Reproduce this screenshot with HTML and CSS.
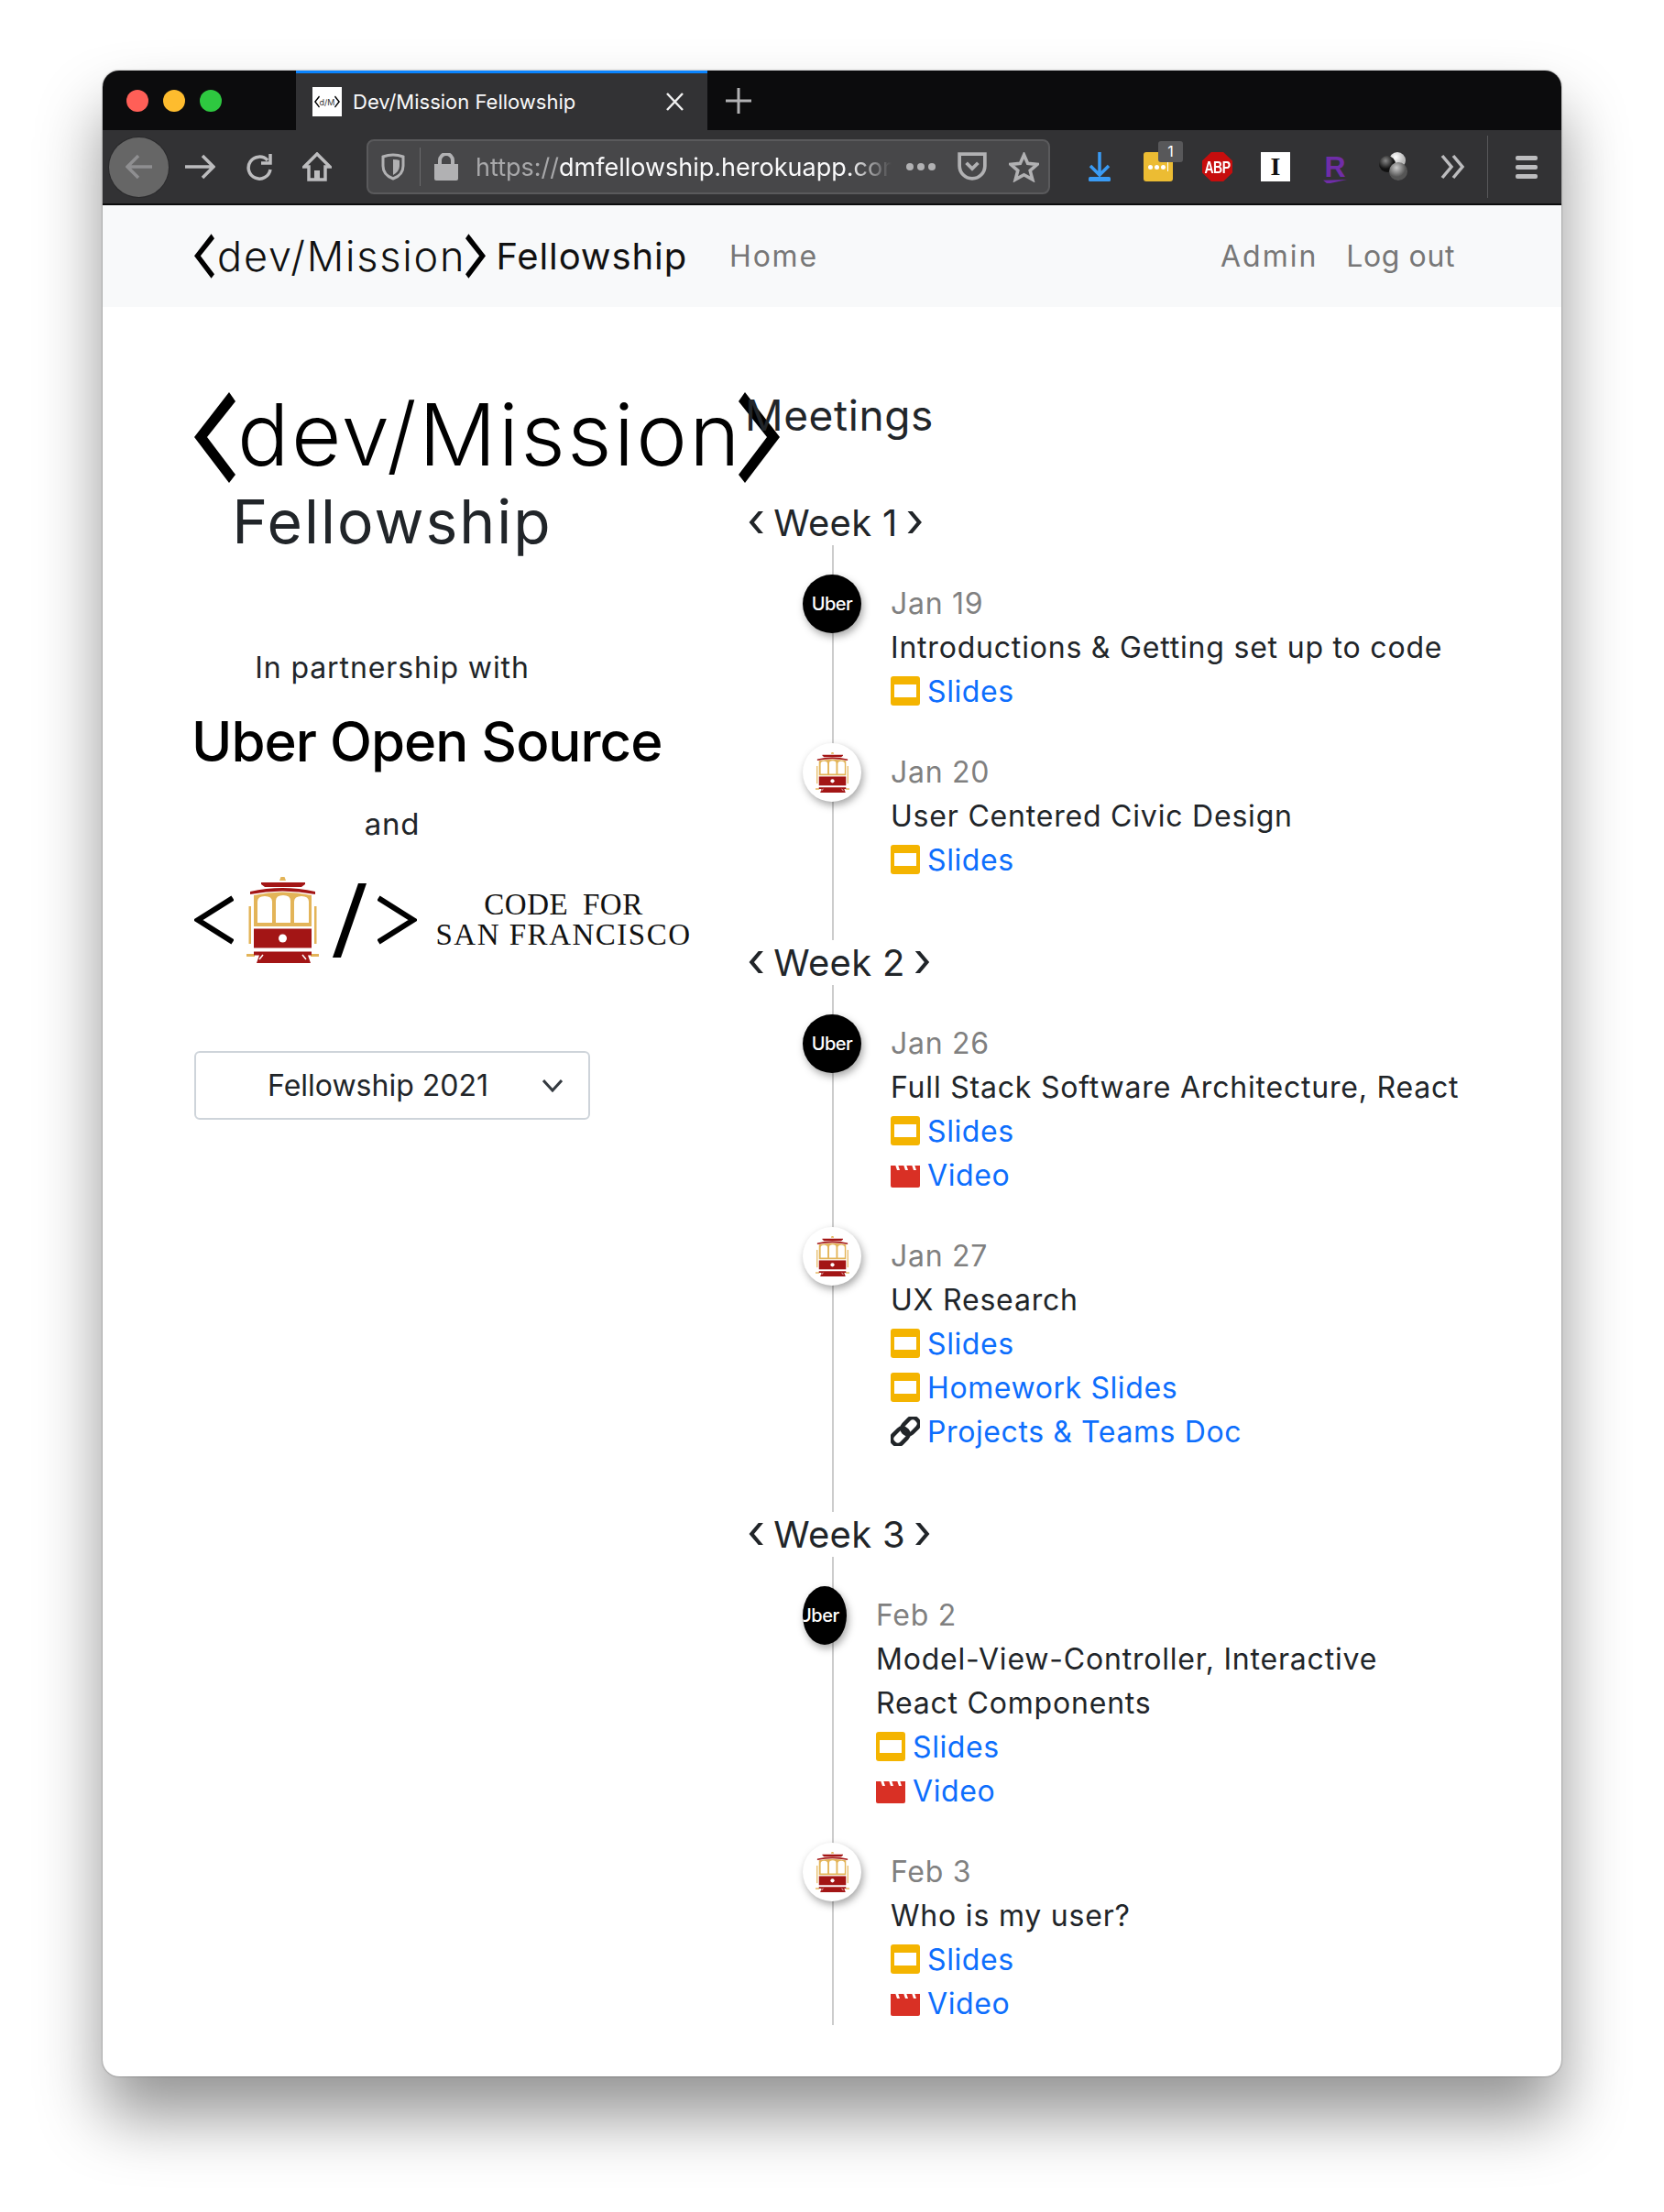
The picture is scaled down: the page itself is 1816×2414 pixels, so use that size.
FILE: index.html
```html
<!DOCTYPE html>
<html>
<head>
<meta charset="utf-8">
<title>Dev/Mission Fellowship</title>
<link rel="stylesheet" href="styles.css">
</head>
<body>

<svg class="defs" width="0" height="0">
	<symbol id="chev-l" viewBox="0 0 45 99"><polygon points="38,0 45,10 14,49 45,90 38,99 0,49"/></symbol>
	<symbol id="chev-r" viewBox="0 0 45 99"><polygon points="7,0 0,10 31,49 0,90 7,99 45,49"/></symbol>
	<symbol id="trolley" viewBox="0 0 79 94">
		<polygon points="36,4 37.5,0 41.5,0 43,4" fill="#e3b458"/>
		<path d="M16 6h48v2l-4 3H20l-4-3z" fill="#a31515"/>
		<path d="M4 16Q39 8 75 16v3Q39 12 4 19z" fill="#a31515"/>
		<path d="M8 20Q39 13 71 20v34H8z" fill="#e3b458"/>
		<path d="M12 50V27q0-6 8-6t8 6v23zM32 50V26q0-6 8-6t8 6v24zM52 50V27q0-6 8-6t8 6v23z" fill="#fff"/>
		<rect x="2.5" y="32" width="2.5" height="41" fill="#e3b458"/>
		<rect x="74" y="32" width="2.5" height="41" fill="#e3b458"/>
		<rect x="8" y="56.500" width="63" height="21" fill="#a31515"/>
		<circle cx="39.500" cy="67" r="4.500" fill="#fff"/>
		<rect x="0" y="84" width="9" height="3" fill="#e3b458"/>
		<rect x="70" y="84" width="9" height="3" fill="#e3b458"/>
		<path d="M8 81.500h63v4h-4l3 8.500H11l3-8.500H8z" fill="#a31515"/>
		<path d="M18 85l-4 5M61 85l4 5" stroke="#fff" stroke-width="1.500"/>
	</symbol>
	<symbol id="slides" viewBox="0 0 32 32">
		<rect width="32" height="32" rx="3" fill="#f4b400"/>
		<rect x="4" y="9" width="24" height="14" fill="#fff"/>
	</symbol>
	<symbol id="video" viewBox="0 0 32 32">
		<path d="M0 6h32v22a2 2 0 0 1-2 2H2a2 2 0 0 1-2-2z" fill="#d93025"/>
		<path d="M5 5l2 6h3L8 5zM14 5l2 6h3l-2-6zM23 5l2 6h3l-2-6z" fill="#fff"/>
	</symbol>
	<symbol id="link" viewBox="0 0 32 32">
		<g fill="none" stroke="#212529" stroke-width="4.500" transform="rotate(-45 16 16)">
			<rect x="-2" y="9.500" width="20" height="13" rx="6"/>
			<rect x="14" y="9.500" width="20" height="13" rx="6"/>
		</g>
	</symbol>
</svg>

<div class="window">

	<div class="tabstrip">
		<span class="light red"></span>
		<span class="light orange"></span>
		<span class="light green"></span>
		<div class="tab">
			<span class="favicon">
				<svg class="fav-chev"><use href="#chev-l"/></svg><span>d/M</span><svg class="fav-chev"><use href="#chev-r"/></svg>
			</span>
			<span class="tab-title">Dev/Mission Fellowship</span>
			<svg class="tab-close" viewBox="0 0 21 20"><path d="M2 1l17 18M19 1L2 19"/></svg>
		</div>
		<svg class="new-tab" viewBox="0 0 28 28"><path d="M14 0v28M0 14h28"/></svg>
	</div>

	<div class="toolbar">
		<span class="back-btn">
			<svg viewBox="0 0 30 28"><path d="M29 14H2M14 2L2 14l12 12"/></svg>
		</span>
		<svg class="tool forward" viewBox="0 0 33 28"><path d="M0 14h30M19 2l12 12-12 12"/></svg>
		<svg class="tool reload" viewBox="0 0 30 30"><path d="M24 8a12 12 0 1 0 3 10"/><path d="M27 1v10H17" /></svg>
		<svg class="tool home" viewBox="0 0 32 32"><path d="M16 2L2 16h5v14h18V16h5z"/><rect class="solid" x="13" y="20" width="6" height="10"/></svg>

		<div class="urlbar">
			<svg class="url-shield" viewBox="0 0 26 30"><path d="M2 4q11-4 22 0v10q0 10-11 14Q2 24 2 14z"/><path class="solid" d="M13 7q5 0 7 1v6q0 6-7 10z"/></svg>
			<span class="url-sep"></span>
			<svg class="url-lock" viewBox="0 0 26 30"><path class="solid" d="M0 12h26v16a2 2 0 0 1-2 2H2a2 2 0 0 1-2-2z"/><path d="M6 13V8a7 7 0 0 1 14 0v5" fill="none" stroke="#b1b1b3" stroke-width="4"/></svg>
			<span class="url-text"><span class="url-scheme">https://</span>dmfellowship.herokuapp.com</span>
			<span class="url-dots"><i></i><i></i><i></i></span>
			<svg class="url-pocket" viewBox="0 0 30 30"><path d="M2 2h26v12a13 13 0 0 1-26 0z"/><path d="M9 11l6 6 6-6"/></svg>
			<svg class="url-star" viewBox="0 0 32 32"><path d="M16 3l4 9 10 1-7.500 6.500L25 29l-9-5-9 5 2.500-9.500L2 13l10-1z"/></svg>
		</div>

		<svg class="ext download" viewBox="0 0 24 32"><path d="M12 0v24M2 15l10 10 10-10" fill="none" stroke="#3a9bf4" stroke-width="3.500"/><rect y="27" width="24" height="5" rx="1.500" fill="#3a9bf4"/></svg>
		<span class="ext lastpass">
			<span class="lp-dots"><i></i><i></i><i></i><b></b></span>
			<span class="lp-badge">1</span>
		</span>
		<span class="ext abp"><span>ABP</span></span>
		<span class="ext instapaper">I</span>
		<span class="ext readkit">R</span>
		<svg class="ext balls" viewBox="0 0 30 32">
			<defs>
				<radialGradient id="ball-w" cx="40%" cy="30%"><stop offset="0" stop-color="#fff"/><stop offset="1" stop-color="#bbb"/></radialGradient>
				<radialGradient id="ball-k" cx="40%" cy="30%"><stop offset="0" stop-color="#888"/><stop offset="1" stop-color="#111"/></radialGradient>
				<radialGradient id="ball-g" cx="40%" cy="30%"><stop offset="0" stop-color="#ccc"/><stop offset="1" stop-color="#555"/></radialGradient>
			</defs>
			<circle cx="20" cy="9" r="9" fill="url(#ball-w)"/>
			<circle cx="9" cy="13" r="9" fill="url(#ball-k)"/>
			<circle cx="21" cy="21" r="10" fill="url(#ball-g)"/>
		</svg>
		<svg class="tool more" viewBox="0 0 27 28"><path d="M2 2l10 12L2 26M14 2l10 12-10 12"/></svg>
		<span class="tool-sep"></span>
		<span class="hamburger"><i></i><i></i><i></i></span>
	</div>

	<div class="navbar">
		<a class="brand">
			<svg class="brand-chev"><use href="#chev-l"/></svg><span class="brand-dm">dev/Mission</span><svg class="brand-chev"><use href="#chev-r"/></svg>
			<span class="brand-name">Fellowship</span>
		</a>
		<a class="nav-link home-link">Home</a>
		<a class="nav-link admin-link">Admin</a>
		<a class="nav-link">Log out</a>
	</div>

	<div class="content">

		<div class="sidebar">
			<div class="hero-logo">
				<svg class="hero-chev"><use href="#chev-l"/></svg><span class="hero-dm">dev/Mission</span><svg class="hero-chev"><use href="#chev-r"/></svg>
			</div>
			<h1 class="hero-name">Fellowship</h1>
			<p class="partner-text">In partnership with</p>
			<div class="uber-logo">Uber Open Source</div>
			<p class="and-text">and</p>
			<div class="c4sf-logo">
				<svg class="c4sf-mark" viewBox="0 0 43 54"><path d="M42 3L4 27l38 24" fill="none" stroke="#000" stroke-width="6"/></svg>
				<svg class="c4sf-trolley"><use href="#trolley"/></svg>
				<svg class="c4sf-slash" viewBox="0 0 37 81"><polygon points="28,0 37,0 9,81 0,81"/></svg>
				<svg class="c4sf-mark" viewBox="0 0 43 54"><path d="M1 3l38 24L1 51" fill="none" stroke="#000" stroke-width="6"/></svg>
				<div class="c4sf-text">
					<span class="c4sf-line1">CODE FOR</span>
					<span>SAN FRANCISCO</span>
				</div>
			</div>
			<div class="year-select">
				Fellowship 2021
				<svg viewBox="0 0 22 14"><path d="M1 1l10 11L21 1"/></svg>
			</div>
		</div>

		<div class="meetings">
			<h2 class="meetings-title">Meetings</h2>

			<h4 class="week"><span class="wk-arrow">&lsaquo;</span><span>Week 1</span><span class="wk-arrow">&rsaquo;</span></h4>
			<ul class="timeline">
				<li class="entry">
					<span class="badge badge-uber"><span>Uber</span></span>
					<div class="entry-body">
						<div class="date">Jan 19</div>
						<div class="topic">Introductions &amp; Getting set up to code</div>
						<a class="res"><svg><use href="#slides"/></svg>Slides</a>
					</div>
				</li>
				<li class="entry">
					<span class="badge badge-c4sf"><svg><use href="#trolley"/></svg></span>
					<div class="entry-body">
						<div class="date">Jan 20</div>
						<div class="topic">User Centered Civic Design</div>
						<a class="res"><svg><use href="#slides"/></svg>Slides</a>
					</div>
				</li>
			</ul>

			<h4 class="week"><span class="wk-arrow">&lsaquo;</span><span>Week 2</span><span class="wk-arrow">&rsaquo;</span></h4>
			<ul class="timeline">
				<li class="entry">
					<span class="badge badge-uber"><span>Uber</span></span>
					<div class="entry-body">
						<div class="date">Jan 26</div>
						<div class="topic">Full Stack Software Architecture, React</div>
						<a class="res"><svg><use href="#slides"/></svg>Slides</a>
						<a class="res"><svg><use href="#video"/></svg>Video</a>
					</div>
				</li>
				<li class="entry">
					<span class="badge badge-c4sf"><svg><use href="#trolley"/></svg></span>
					<div class="entry-body">
						<div class="date">Jan 27</div>
						<div class="topic">UX Research</div>
						<a class="res"><svg><use href="#slides"/></svg>Slides</a>
						<a class="res"><svg><use href="#slides"/></svg>Homework Slides</a>
						<a class="res"><svg><use href="#link"/></svg>Projects &amp; Teams Doc</a>
					</div>
				</li>
			</ul>

			<h4 class="week"><span class="wk-arrow">&lsaquo;</span><span>Week 3</span><span class="wk-arrow">&rsaquo;</span></h4>
			<ul class="timeline last">
				<li class="entry">
					<span class="badge badge-uber squeezed"><span>Uber</span></span>
					<div class="entry-body">
						<div class="date">Feb 2</div>
						<div class="topic">Model-View-Controller, Interactive<br>React Components</div>
						<a class="res"><svg><use href="#slides"/></svg>Slides</a>
						<a class="res"><svg><use href="#video"/></svg>Video</a>
					</div>
				</li>
				<li class="entry">
					<span class="badge badge-c4sf"><svg><use href="#trolley"/></svg></span>
					<div class="entry-body">
						<div class="date">Feb 3</div>
						<div class="topic">Who is my user?</div>
						<a class="res"><svg><use href="#slides"/></svg>Slides</a>
						<a class="res"><svg><use href="#video"/></svg>Video</a>
					</div>
				</li>
			</ul>
		</div>

	</div>
</div>

</body>
</html>
```

FILE: styles.css
```css
html, body {
	margin: 0;
	padding: 0;
	background: #fff;
}
body {
	height: 2414px;
	overflow: hidden;
	font-family: Inter, "Liberation Sans", sans-serif;
	color: #212529;
}
.defs {
	position: absolute;
}
h1, h2, h4, p, ul {
	margin: 0;
	padding: 0;
	font-weight: 400;
}

/* window */
.window {
	width: 1592px;
	height: 2189px;
	margin: 77px 0 0 112px;
	background: #fff;
	border-radius: 18px;
	overflow: hidden;
	box-shadow: 0 44px 70px rgba(0,0,0,.42), 0 0 2px rgba(0,0,0,.5);
}

/* tab strip */
.tabstrip {
	display: flex;
	align-items: center;
	height: 65px;
	background: #0c0c0d;
}
.light {
	width: 24px;
	height: 24px;
	border-radius: 50%;
	margin-right: 16px;
}
.red {
	background: #ff5f57;
	margin-left: 26px;
}
.orange {
	background: #febc2e;
}
.green {
	background: #2ec840;
	margin-right: 0;
}
.tab {
	display: flex;
	align-items: center;
	width: 449px;
	height: 62px;
	margin-left: 81px;
	background: #323234;
	border-top: 3px solid #0a84ff;
}
.favicon {
	display: flex;
	align-items: center;
	justify-content: center;
	width: 32px;
	height: 32px;
	margin-left: 18px;
	background: #fff;
	color: #333;
	font-size: 9px;
}
.fav-chev {
	width: 6px;
	height: 18px;
}
.tab-title {
	margin-left: 12px;
	width: 341px;
	font-size: 22px;
	color: #f9f9fa;
	white-space: nowrap;
}
.tab-close {
	width: 21px;
	height: 20px;
	fill: none;
	stroke: #f0f0f0;
	stroke-width: 2.5;
}
.new-tab {
	width: 28px;
	height: 28px;
	margin-left: 20px;
	fill: none;
	stroke: #b1b1b3;
	stroke-width: 3;
}

/* toolbar */
.toolbar {
	display: flex;
	align-items: center;
	height: 80px;
	background: #323234;
	border-bottom: 2px solid #0c0c0d;
}
.toolbar svg {
	flex: none;
}
.tool path, .tool rect {
	fill: none;
	stroke: #bcbcbe;
	stroke-width: 3.5;
}
.tool .solid {
	fill: #bcbcbe;
	stroke: none;
}
.back-btn {
	display: flex;
	align-items: center;
	justify-content: center;
	width: 65px;
	height: 65px;
	margin-left: 7px;
	border-radius: 50%;
	background: #666;
	box-shadow: 0 0 0 1px #2a2a2c;
}
.back-btn svg {
	width: 30px;
	height: 28px;
	fill: none;
	stroke: #8f8f91;
	stroke-width: 3.5;
}
.forward {
	width: 33px;
	height: 28px;
	margin-left: 18px;
}
.reload {
	width: 30px;
	height: 30px;
	margin-left: 33px;
}
.home {
	width: 32px;
	height: 32px;
	margin-left: 32px;
}
.urlbar {
	display: flex;
	flex: none;
	align-items: center;
	box-sizing: border-box;
	width: 746px;
	height: 60px;
	margin-left: 38px;
	background: #474749;
	border: 2px solid #5a5a5c;
	border-radius: 8px;
}
.url-shield {
	width: 26px;
	height: 30px;
	margin-left: 14px;
	fill: none;
	stroke: #b1b1b3;
	stroke-width: 3;
}
.url-shield .solid {
	stroke: none;
	fill: #b1b1b3;
}
.url-sep {
	width: 1px;
	height: 42px;
	margin-left: 16px;
	background: #6a6a6c;
}
.url-lock {
	width: 26px;
	height: 30px;
	margin-left: 15px;
}
.url-lock .solid {
	fill: #b1b1b3;
}
.url-text {
	width: 454px;
	margin-left: 19px;
	overflow: hidden;
	white-space: nowrap;
	font-size: 27px;
	color: #f9f9fa;
	-webkit-mask-image: linear-gradient(to right, #000 90%, transparent 100%);
	mask-image: linear-gradient(to right, #000 90%, transparent 100%);
}
.url-scheme {
	color: #a8a8aa;
}
.url-dots {
	display: flex;
	gap: 4px;
	margin-left: 16px;
}
.url-dots i {
	display: block;
	width: 8px;
	height: 8px;
	border-radius: 50%;
	background: #b1b1b3;
}
.url-pocket {
	width: 32px;
	height: 32px;
	margin-left: 24px;
	fill: none;
	stroke: #b1b1b3;
	stroke-width: 3.5;
}
.url-star {
	width: 33px;
	height: 33px;
	margin-left: 24px;
	fill: none;
	stroke: #b1b1b3;
	stroke-width: 3.5;
}

/* extensions */
.ext {
	display: flex;
	flex: none;
	align-items: center;
	justify-content: center;
	height: 32px;
}
.download {
	width: 24px;
	margin-left: 42px;
}
.lastpass {
	position: relative;
	width: 32px;
	margin-left: 36px;
	background: #ecbc33;
	border-radius: 3px;
}
.lp-dots {
	display: flex;
	align-items: center;
	gap: 2px;
}
.lp-dots i {
	width: 5px;
	height: 5px;
	border-radius: 50%;
	background: #fff;
}
.lp-dots b {
	width: 1px;
	height: 10px;
	background: #fff;
}
.lp-badge {
	position: absolute;
	top: -12px;
	left: 16px;
	width: 27px;
	height: 23px;
	border-radius: 3px;
	background: #58585a;
	color: #fff;
	font-size: 16px;
	line-height: 23px;
	text-align: center;
}
.abp {
	width: 33px;
	margin-left: 32px;
	background: #c70d0d;
	clip-path: polygon(30% 0, 70% 0, 100% 30%, 100% 70%, 70% 100%, 30% 100%, 0 70%, 0 30%);
	color: #fff;
	font: bold 14px "Liberation Sans", sans-serif;
	letter-spacing: -.5px;
}
.abp span {
	transform: scaleY(1.3);
}
.instapaper {
	width: 32px;
	margin-left: 31px;
	background: #fff;
	color: #111;
	font: bold 28px "Liberation Serif", serif;
}
.readkit {
	position: relative;
	width: 26px;
	margin-left: 36px;
	color: #6f2da8;
	font: bold 32px "Liberation Sans", sans-serif;
}
.readkit::after {
	content: "";
	position: absolute;
	left: 0;
	bottom: -2px;
	width: 26px;
	height: 4px;
	background: #6f2da8;
	clip-path: polygon(0 20%, 100% 0, 30% 100%, 15% 100%);
}
.balls {
	width: 32px;
	margin-left: 34px;
}
.more {
	width: 27px;
	height: 28px;
	margin-left: 36px;
}
.tool-sep {
	width: 1px;
	height: 68px;
	margin-left: 24px;
	background: #58585a;
}
.hamburger {
	display: flex;
	flex-direction: column;
	gap: 5px;
	width: 24px;
	margin-left: 30px;
}
.hamburger i {
	display: block;
	height: 5px;
	border-radius: 2px;
	background: #bcbcbe;
}

/* site nav */
.navbar {
	display: flex;
	align-items: center;
	height: 111px;
	padding-left: 100px;
	background: #f8f9fa;
}
.brand {
	display: flex;
	align-items: center;
	color: #111;
}
.brand-chev {
	flex: none;
	width: 22px;
	height: 49px;
}
.brand-dm {
	font-weight: 300;
	font-size: 45px;
	line-height: 49px;
	letter-spacing: 1.800px;
	margin-left: 3px;
}
.brand-name {
	margin-left: 11px;
	font-size: 40px;
	letter-spacing: .9px;
}
.nav-link {
	font-size: 32px;
	letter-spacing: .6px;
	color: #777;
}
.home-link {
	margin-left: 46px;
	letter-spacing: 1.800px;
}
.admin-link {
	margin-left: auto;
	margin-right: 31px;
	letter-spacing: 2px;
}
.navbar .nav-link:last-child {
	margin-right: 116px;
}

/* page */
.content {
	display: grid;
	grid-template-columns: 432px 1fr;
	column-gap: 171px;
	padding-left: 100px;
}
.sidebar {
	display: flex;
	flex-direction: column;
	width: 432px;
	text-align: center;
}
.hero-logo {
	display: flex;
	align-items: center;
	width: 660px;
	height: 99px;
	margin-top: 93px;
	color: #000;
}
.hero-chev {
	flex: none;
	width: 45px;
	height: 99px;
}
.hero-dm {
	font-weight: 300;
	font-size: 94px;
	line-height: 99px;
	letter-spacing: 2.300px;
	margin: -6px -4px 0 2px;
	white-space: nowrap;
}
.hero-name {
	margin-top: 9px;
	font-size: 66px;
	line-height: 66px;
	letter-spacing: 2px;
}
.partner-text {
	margin-top: 103px;
	font-size: 32px;
	line-height: 48px;
	letter-spacing: .9px;
}
.uber-logo {
	margin: 26px 0 0 -3px;
	font-size: 60px;
	line-height: 60px;
	font-weight: 500;
	letter-spacing: -1px;
	color: #000;
	text-align: left;
	white-space: nowrap;
}
.and-text {
	margin-top: 36px;
	font-size: 33px;
	line-height: 48px;
	letter-spacing: .8px;
}
.c4sf-logo {
	display: flex;
	align-items: center;
	width: 560px;
	height: 94px;
	margin-top: 34px;
}
.c4sf-mark {
	flex: none;
	width: 43px;
	height: 54px;
}
.c4sf-trolley {
	flex: none;
	width: 79px;
	height: 94px;
	margin: 0 15px 0 14px;
}
.c4sf-slash {
	flex: none;
	width: 37px;
	height: 81px;
	margin-right: 12px;
}
.c4sf-text {
	display: flex;
	flex-direction: column;
	align-items: center;
	width: 274px;
	margin-left: 23px;
	font-family: "Liberation Serif", serif;
	font-size: 33px;
	line-height: 33px;
	letter-spacing: 1.500px;
	color: #111;
	white-space: nowrap;
}
.c4sf-line1 {
	letter-spacing: .5px;
	word-spacing: 7px;
}
.year-select {
	display: flex;
	align-items: center;
	box-sizing: border-box;
	width: 432px;
	height: 75px;
	margin-top: 96px;
	padding-left: 78px;
	border: 2px solid #ced4da;
	border-radius: 6px;
	font-size: 32px;
	text-align: left;
}
.year-select svg {
	width: 22px;
	height: 14px;
	margin-left: auto;
	margin-right: 28px;
	fill: none;
	stroke: #343a40;
	stroke-width: 3;
}

/* timeline */
.meetings-title {
	margin: 90px 0 0 -2px;
	font-size: 46px;
	line-height: 56px;
	letter-spacing: .6px;
}
.week {
	position: relative;
	z-index: 1;
	display: flex;
	gap: 9px;
	height: 49px;
	background: #fff;
	font-size: 40px;
	line-height: 49px;
	letter-spacing: .3px;
}
.wk-arrow {
	font-size: 52px;
	line-height: 44px;
}
.meetings-title + .week {
	margin-top: 65px;
}
.timeline {
	position: relative;
	padding: 40px 0 64px 61px;
	list-style: none;
}
.timeline.last {
	padding-bottom: 0;
}
.timeline::before {
	content: "";
	position: absolute;
	top: 0;
	bottom: 0;
	left: 93px;
	width: 2px;
	background: #ccc;
}
.entry {
	position: relative;
	display: flex;
	margin-bottom: 41px;
}
.entry:last-child {
	margin-bottom: 0;
}
.badge {
	display: flex;
	flex: none;
	align-items: center;
	justify-content: center;
	width: 64px;
	height: 64px;
	margin: -8px 32px 0 0;
	border-radius: 50%;
	overflow: hidden;
	box-shadow: 2px 4px 8px rgba(0,0,0,.35);
}
.badge-uber {
	background: #000;
	color: #fff;
	font-size: 20px;
	font-weight: 500;
	letter-spacing: -.5px;
}
.badge-c4sf {
	background: #fff;
}
.badge-c4sf svg {
	width: 37px;
	height: 44px;
}
.squeezed {
	justify-content: flex-start;
	width: 48px;
}
.squeezed span {
	margin-left: -5px;
}
.date {
	font-size: 32px;
	line-height: 48px;
	letter-spacing: .7px;
	color: #808080;
}
.topic {
	font-size: 32px;
	line-height: 48px;
	letter-spacing: .8px;
	margin-bottom: -1px;
	white-space: nowrap;
}
.res {
	display: flex;
	align-items: center;
	gap: 8px;
	height: 48px;
	font-size: 32px;
	letter-spacing: .6px;
	color: #0d6efd;
	white-space: nowrap;
}
.res svg {
	flex: none;
	width: 32px;
	height: 32px;
}
```
